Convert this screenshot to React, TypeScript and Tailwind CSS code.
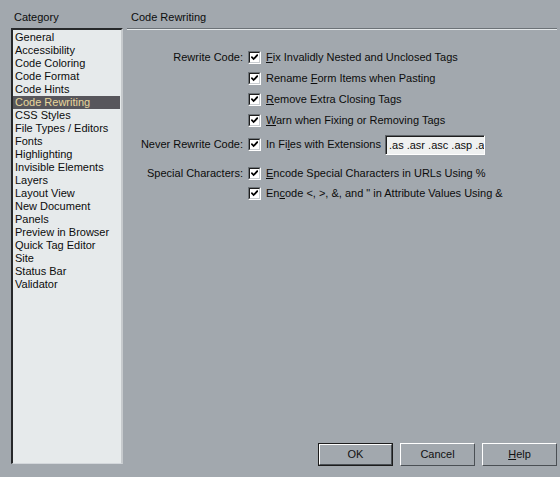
import React from "react";

const categories = [
  "General",
  "Accessibility",
  "Code Coloring",
  "Code Format",
  "Code Hints",
  "Code Rewriting",
  "CSS Styles",
  "File Types / Editors",
  "Fonts",
  "Highlighting",
  "Invisible Elements",
  "Layers",
  "Layout View",
  "New Document",
  "Panels",
  "Preview in Browser",
  "Quick Tag Editor",
  "Site",
  "Status Bar",
  "Validator",
];

const Check = () => (
  <div className="w-[13px] h-[13px] shrink-0 border-t border-l border-[#6e7479] border-b border-r border-b-white border-r-white">
    <div className="w-full h-full bg-white border-t border-l border-[#1e1e1e] border-b border-r border-b-[#c9cdd1] border-r-[#c9cdd1] flex items-center justify-center">
      <svg width="7" height="7" viewBox="0 0 7 7">
        <path d="M0.3 2.6 L2.6 5 L6.8 0.6" fill="none" stroke="#000" strokeWidth="1.8" />
      </svg>
    </div>
  </div>
);

// label with one underlined access key
const Key = ({ pre, k, post }: { pre?: string; k: string; post: string }) => (
  <span className="whitespace-nowrap">
    {pre}
    <span className="underline underline-offset-1">{k}</span>
    {post}
  </span>
);

const Row = ({
  label,
  children,
  className = "",
}: {
  label?: string;
  children: React.ReactNode;
  className?: string;
}) => (
  <div className={"flex items-center h-[13px] " + className}>
    <div className="w-[121px] text-right pr-[5px] whitespace-nowrap">{label}</div>
    <Check />
    <div className="pl-[5px] flex items-center">{children}</div>
  </div>
);

const Button = ({ children, primary }: { children: React.ReactNode; primary?: boolean }) => (
  <div className={"w-[75px] h-[23px] " + (primary ? "border border-[#1c1c1c]" : "")}>
    <div className="w-full h-full border border-t-white border-l-white border-b-[#4a4f54] border-r-[#4a4f54] flex items-center justify-center text-[#111]">
      {children}
    </div>
  </div>
);

export default function App() {
  return (
    <div
      className="w-[560px] h-[477px] bg-[#a2a8ae] flex text-[11px] text-[#0c0c0c] overflow-hidden"
      style={{ fontFamily: '"Liberation Sans", Arial, sans-serif' }}
    >
      {/* category list */}
      <div className="w-[127px] pl-[11px] pt-[11px] flex flex-col shrink-0">
        <div className="pl-[3px] h-[17px] leading-[13px]">Category</div>
        <div className="w-[112px] h-[436px] border-t-2 border-l-2 border-t-[#26282a] border-l-[#26282a] border-b border-r-2 border-b-[#d3d7db] border-r-[#c6cacd] bg-[#e6eaeb] pt-[1px]">
          {categories.map((c) => (
            <div
              key={c}
              className={
                "h-[13px] leading-[13px] pl-[2px] mr-[1px] whitespace-nowrap " +
                (c === "Code Rewriting" ? "bg-[#57565b] text-[#e8d69c]" : "")
              }
            >
              {c}
            </div>
          ))}
        </div>
      </div>

      {/* settings panel */}
      <div className="flex-1 flex flex-col pt-[11px] pr-[3px]">
        <div className="pl-[4px] h-[17px] leading-[13px]">Code Rewriting</div>
        <div className="h-[2px] border-t border-t-[#6c7277] border-b border-b-[#e4e8ea]" />

        <div className="pt-[21px] flex flex-col">
          <Row label="Rewrite Code:">
            <Key k="F" post="ix Invalidly Nested and Unclosed Tags" />
          </Row>
          <Row className="mt-[8px]">
            <Key pre="Rename " k="F" post="orm Items when Pasting" />
          </Row>
          <Row className="mt-[8px]">
            <Key k="R" post="emove Extra Closing Tags" />
          </Row>
          <Row className="mt-[8px]">
            <Key k="W" post="arn when Fixing or Removing Tags" />
          </Row>
          <Row label="Never Rewrite Code:" className="mt-[11px]">
            <Key pre="In Fi" k="l" post="es with Extensions" />
            <div className="ml-[4px] w-[100px] h-[20px] border-t border-l border-t-[#5f6469] border-l-[#5f6469] border-b border-r border-b-white border-r-white">
              <div className="w-full h-full bg-[#eff1f1] border-t border-l border-t-[#1e1e1e] border-l-[#1e1e1e] pl-[2px] leading-[17px] whitespace-nowrap overflow-hidden">
                .as .asr .asc .asp .a
              </div>
            </div>
          </Row>
          <Row label="Special Characters:" className="mt-[16px]">
            <Key k="E" post="ncode Special Characters in URLs Using %" />
          </Row>
          <Row className="mt-[7px]">
            <Key pre="En" k="c" post={'ode <, >, &, and " in Attribute Values Using &'} />
          </Row>
        </div>

        <div className="mt-auto mb-[11px] flex justify-end gap-[7px]">
          <Button primary>OK</Button>
          <Button>Cancel</Button>
          <Button>
            <Key k="H" post="elp" />
          </Button>
        </div>
      </div>
    </div>
  );
}
